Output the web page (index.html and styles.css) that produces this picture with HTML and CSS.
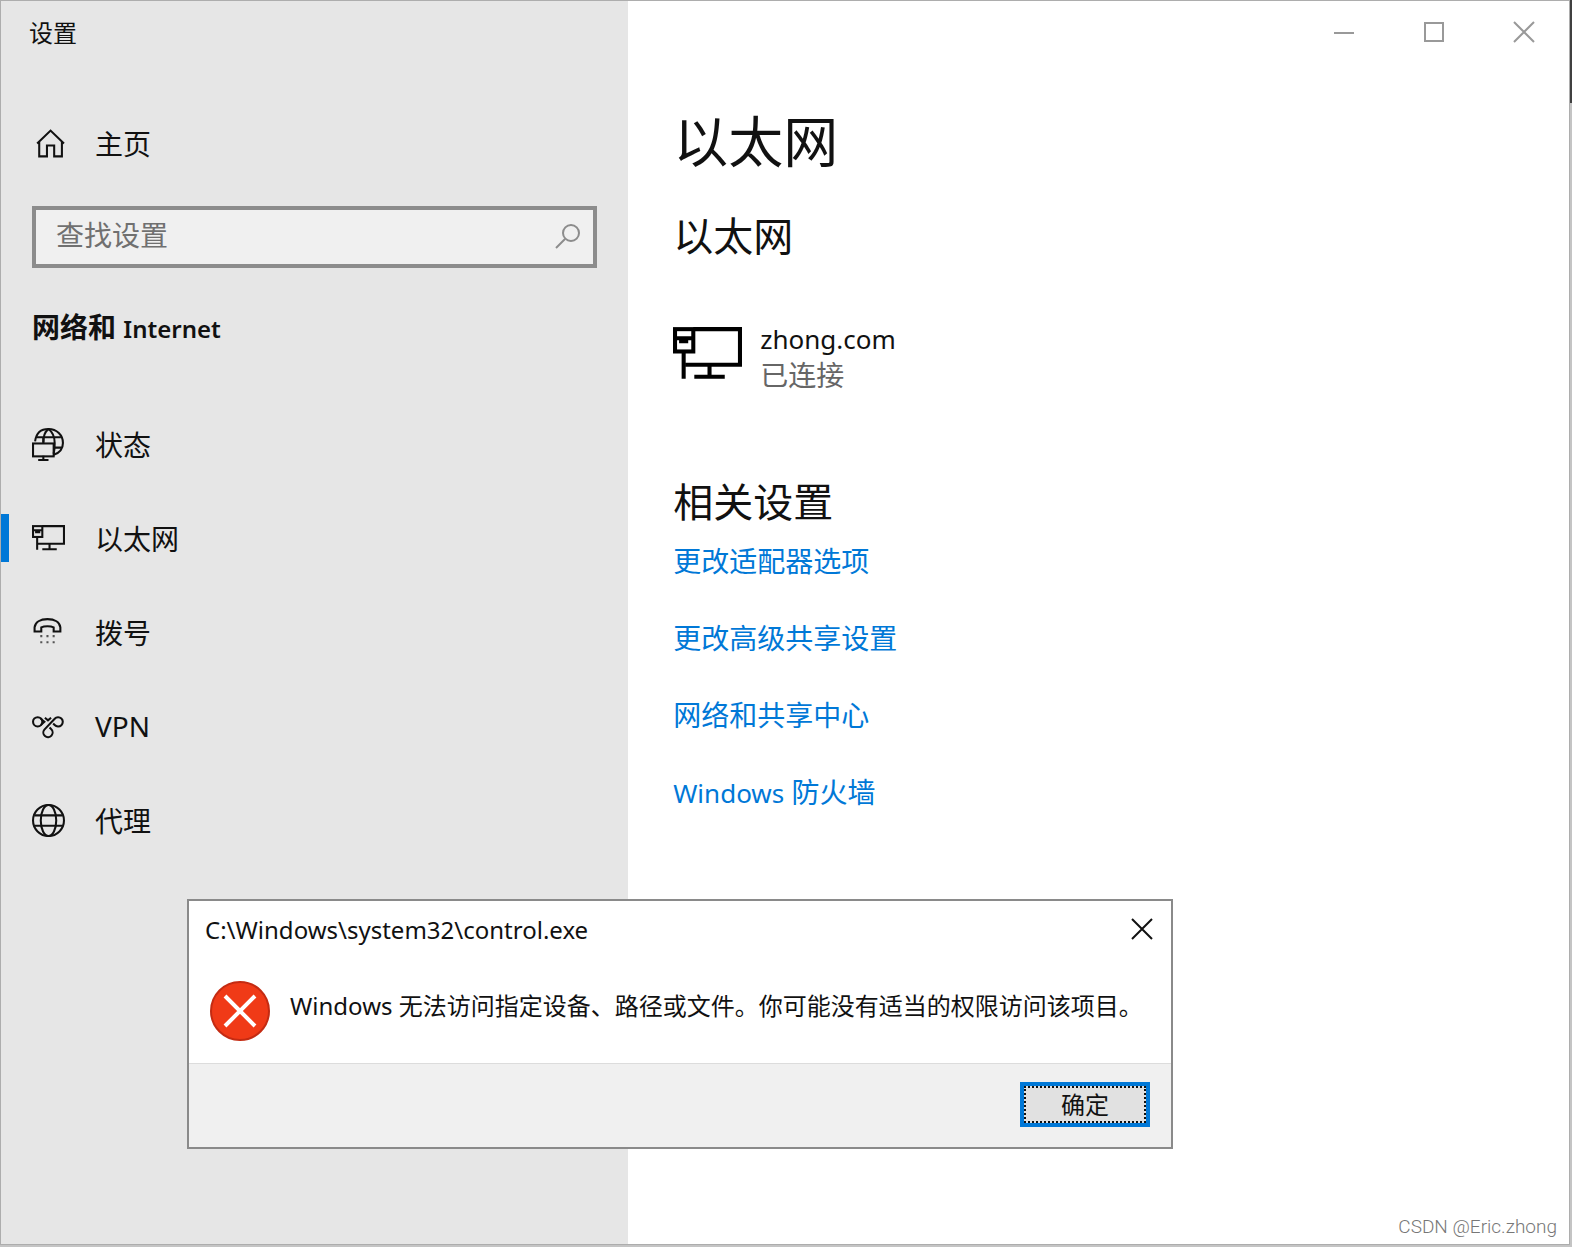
FILE: index.html
```
<!DOCTYPE html>
<html lang="zh-CN">
<head>
    <meta charset="UTF-8">
    <meta name="viewport" content="width=device-width, initial-scale=1.0">
    <title>设置</title>
    <link rel="stylesheet" href="styles.css">
</head>
<body>
    <div class="window">
        <aside class="sidebar">
            <div class="app-title">设置</div>
            <a class="nav-link home" href="#">
                <svg class="icon" viewBox="0 0 32 32"><path d="M5 16 L18 3.500 L31 16 M7 14 V28.500 H14.500 V18 H21.500 V28.500 H29 V14"/></svg>
                <span>主页</span>
            </a>
            <form class="search">
                <input type="search" aria-label="查找设置" placeholder="查找设置">
                <button type="button" aria-label="搜索">
                    <svg viewBox="0 0 28 28"><circle cx="17" cy="10" r="8"/><path d="M11 16 L2 25"/></svg>
                </button>
            </form>
            <h2 class="group-title">网络和 <span class="latin">Internet</span></h2>
            <nav>
                <a class="nav-link" href="#">
                    <svg class="icon" viewBox="0 0 32 32">
                        <path d="M3 13 C4 5 9 1 16 1 C24 1 30 7 30 14.500 C30 20 27 24 21 26"/>
                        <path d="M4.500 9 H28 M22 19 H29 M11 14 C11 8 13 3 16 1 C20 4 22 9 22 14.500 C22 18 22 21 21 25"/>
                        <rect x="1" y="15" width="20" height="12.500"/>
                        <path d="M11 9 V15 M11 27 V31 M6 31 H16"/>
                    </svg>
                    <span>状态</span>
                </a>
                <a class="nav-link active" href="#">
                    <svg class="icon" viewBox="0 0 32 32">
                        <path d="M10 4 H31 V21 H5"/>
                        <rect x="1" y="4" width="9" height="10.500"/>
                        <path d="M1 8 H10 M4 8 V10 H7 V8 M5 14 V27 M17 21 V26 M10 26.500 H24"/>
                    </svg>
                    <span>以太网</span>
                </a>
                <a class="nav-link" href="#">
                    <svg class="icon" viewBox="0 0 32 32">
                        <path d="M2.500 15 V11 C3 6 8 3 15 3 C22 3 27 6 27.500 11 V15 H21 V11 C18 9.500 12 9.500 9 11 V15 Z"/>
                        <path class="dots" d="M8 19.500 h2 M14 19.500 h2 M20 19.500 h2 M8 25.500 h2 M14 25.500 h2 M20 25.500 h2"/>
                    </svg>
                    <span>拨号</span>
                </a>
                <a class="nav-link" href="#">
                    <svg class="icon" viewBox="0 0 32 32">
                        <circle cx="5.500" cy="11.500" r="4.500"/>
                        <path d="M8.500 8.500 L12 11.500 L8.500 14.500 M12.500 7.500 L15.500 10 L18.500 7.500"/>
                        <path d="M12 19 L22 8.500 A4.500 4.500 0 1 1 22 14.500 L20.500 13 M12 19 A4.500 4.500 0 1 0 18.500 18.500 L17 17"/>
                    </svg>
                    <span>VPN</span>
                </a>
                <a class="nav-link" href="#">
                    <svg class="icon" viewBox="0 0 32 32">
                        <circle cx="16" cy="16" r="15"/>
                        <ellipse cx="16" cy="16" rx="7.500" ry="15"/>
                        <path d="M2.500 11 H29.500 M2.500 21 H29.500"/>
                    </svg>
                    <span>代理</span>
                </a>
            </nav>
        </aside>

        <main class="content">
            <div class="caption">
                <button type="button" aria-label="最小化"><svg viewBox="0 0 22 22"><path d="M1 12 H21"/></svg></button>
                <button type="button" aria-label="最大化"><svg viewBox="0 0 22 22"><rect x="2" y="2" width="18" height="18"/></svg></button>
                <button type="button" aria-label="关闭"><svg viewBox="0 0 22 22"><path d="M1 1 L21 21 M21 1 L1 21"/></svg></button>
            </div>
            <h1>以太网</h1>
            <h2>以太网</h2>
            <div class="connection">
                <svg viewBox="0 0 68 52">
                    <path d="M20 2 H66 V37 H12"/>
                    <rect x="2" y="2" width="18" height="22"/>
                    <path d="M2 11 H20 M8 11 V14 H13 V11 M10.500 24 V51 M36 37 V48 M21 49 H51"/>
                </svg>
                <div>
                    <div class="latin">zhong.com</div>
                    <div class="status">已连接</div>
                </div>
            </div>
            <h2 class="related">相关设置</h2>
            <div class="links">
                <a href="#">更改适配器选项</a>
                <a href="#">更改高级共享设置</a>
                <a href="#">网络和共享中心</a>
                <a href="#"><span class="latin">Windows</span> 防火墙</a>
            </div>
            <div class="watermark">CSDN @Eric.zhong</div>
        </main>
    </div>

    <div class="dialog" role="alertdialog" aria-labelledby="dialogTitle">
        <div class="dialog-header">
            <span id="dialogTitle">C:\Windows\system32\control.exe</span>
            <button type="button" aria-label="关闭"><svg viewBox="0 0 22 22"><path d="M1 1 L21 21 M21 1 L1 21"/></svg></button>
        </div>
        <div class="dialog-body">
            <svg viewBox="0 0 60 60">
                <circle cx="30" cy="30" r="29"/>
                <path d="M15 15 L45 45 M45 15 L15 45"/>
            </svg>
            <p>Windows 无法访问指定设备、路径或文件。你可能没有适当的权限访问该项目。</p>
        </div>
        <div class="dialog-footer">
            <button type="button">确定</button>
        </div>
    </div>
</body>
</html>
```
FILE: styles.css
```
* {
    box-sizing: border-box;
}

body {
    margin: 0;
    min-height: 100vh;
    display: flex;
    /* desktop showing behind the window edge */
    background: linear-gradient(#404040 103px, #c4c4c4 103px);
    font-family: "Noto Sans", "Noto Sans CJK SC", sans-serif;
    font-size: 28px;
    color: #111;
}

h1, h2, p {
    margin: 0;
    font-weight: normal;
}

a {
    text-decoration: none;
}

button {
    padding: 0;
    border: none;
    background: none;
    font-family: inherit;
}

svg {
    display: block;
    flex-shrink: 0;
    fill: none;
    stroke: #111;
    stroke-width: 2px;
}

.latin {
    font-size: 26px;
}

.window {
    flex: 1;
    display: flex;
    margin: 0 2px 2px 0;
    border: 1px solid #adadad;
    background: #fff;
}

/* sidebar */
.sidebar {
    width: 40%;
    padding-top: 16px;
    background: #e6e6e6;
}

.app-title {
    padding-left: 28px;
    font-size: 24px;
    line-height: 32px;
}

.nav-link {
    display: flex;
    align-items: center;
    gap: 30px;
    height: 94px;
    padding-left: 31px;
    color: #111;
    position: relative;
}

.icon {
    width: 33px;
    height: 33px;
}

.home {
    height: 48px;
    margin-top: 70px;
}

.active::before {
    content: "";
    position: absolute;
    left: 0;
    top: 23px;
    width: 8px;
    height: 48px;
    background: #0078d7;
}

.icon .dots {
    stroke: #555;
}

.search {
    display: flex;
    align-items: center;
    height: 62px;
    margin: 39px 31px 0;
    padding: 0 11px 0 20px;
    border: 4px solid #8c8c8c;
    background: #f0f0f0;
}

.search input {
    flex: 1;
    min-width: 0;
    padding: 0 0 4px;
    border: none;
    outline: none;
    background: none;
    font-family: inherit;
    font-size: 28px;
}

.search input::placeholder {
    color: #707070;
}

.search svg {
    width: 28px;
    height: 28px;
    stroke: #8c8c8c;
}

.group-title {
    margin: 39px 0 48px 31px;
    font-size: 28px;
    font-weight: 600;
    line-height: 40px;
}

.group-title .latin {
    font-size: 24px;
}

/* content */
.content {
    flex: 1;
    display: flex;
    flex-direction: column;
    padding-left: 45px;
}

.caption {
    display: flex;
    justify-content: flex-end;
}

.caption button {
    display: flex;
    align-items: center;
    justify-content: center;
    width: 90px;
    height: 62px;
}

.caption svg, .dialog-header svg {
    width: 22px;
    height: 22px;
}

.caption svg {
    stroke: #999;
}

h1 {
    margin-top: 46px;
    font-size: 55px;
    line-height: 64px;
}

.content h2 {
    margin-top: 39px;
    font-size: 40px;
    line-height: 48px;
}

.connection {
    display: flex;
    gap: 18px;
    margin-top: 61px;
    line-height: 36px;
}

.connection svg {
    width: 69px;
    height: 53px;
    margin-top: 6px;
    stroke: #000;
    stroke-width: 4px;
}

.status {
    color: #666;
}

.content .related {
    margin-top: 85px;
}

.links {
    display: flex;
    flex-direction: column;
    align-items: flex-start;
    gap: 39px;
    margin-top: 16px;
    line-height: 38px;
}

.links a {
    color: #0078d7;
}

.watermark {
    margin-top: auto;
    padding: 0 12px 5px 0;
    text-align: right;
    font-family: Roboto, sans-serif;
    font-size: 19px;
    font-weight: 300;
    line-height: 24px;
    color: #777;
}

/* error dialog */
.dialog {
    position: absolute;
    left: 187px;
    top: 899px;
    width: 986px;
    border: 2px solid #8a8a8a;
    background: #fff;
    font-size: 24px;
}

.dialog-header {
    display: flex;
    align-items: center;
    justify-content: space-between;
    height: 56px;
    padding: 0 18px 0 16px;
}

.dialog-body {
    display: flex;
    gap: 20px;
    height: 106px;
    padding: 24px 0 0 21px;
}

.dialog-body svg {
    width: 60px;
    height: 60px;
    stroke: #fff;
    stroke-width: 4px;
}

.dialog-body circle {
    fill: #f03a17;
    stroke: #c42b12;
    stroke-width: 2px;
}

.dialog-body p {
    line-height: 50px;
    white-space: nowrap;
}

.dialog-footer {
    display: flex;
    justify-content: flex-end;
    height: 84px;
    padding: 18px 21px 0 0;
    border-top: 1px solid #dcdcdc;
    background: #f0f0f0;
}

.dialog-footer button {
    width: 130px;
    height: 45px;
    border: 4px solid #0078d7;
    outline: 2px dotted #111;
    outline-offset: -6px;
    background: #e1e1e1;
    font-size: 24px;
    line-height: 36px;
    color: #111;
}
```
